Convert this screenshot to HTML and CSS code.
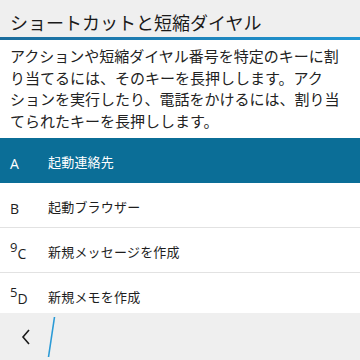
FILE: index.html
```html
<!DOCTYPE html>
<html lang="ja">
<head>
<meta charset="utf-8">
<link rel="stylesheet" href="styles.css">
</head>
<body>
<div class="screen">
  <header class="titlebar">
    <h1 class="title">ショートカットと短縮ダイヤル</h1>
  </header>
  <div class="accent"></div>
  <p class="intro">アクションや短縮ダイヤル番号を特定のキーに割<br>り当てるには、そのキーを長押しします。アク<br>ションを実行したり、電話をかけるには、割り当<br>てられたキーを長押しします。</p>
  <ul class="list">
    <li class="row selected"><span class="key"><span class="letter">A</span></span><span class="label">起動連絡先</span></li>
    <li class="row"><span class="key"><span class="letter">B</span></span><span class="label">起動ブラウザー</span></li>
    <li class="row"><span class="key"><sup class="num">9</sup><span class="letter">C</span></span><span class="label">新規メッセージを作成</span></li>
    <li class="row"><span class="key"><sup class="num">5</sup><span class="letter">D</span></span><span class="label">新規メモを作成</span></li>
  </ul>
  <footer class="actionbar">
    <button class="back" aria-label="戻る">
      <svg width="12" height="18" viewBox="0 0 12 18"><path d="M9 2 L3 9 L9 16" fill="none" stroke="#1a1a1a" stroke-width="1.6"/></svg>
    </button>
    <svg class="divider" width="10" height="44" viewBox="0 0 10 44"><line x1="7.5" y1="2" x2="1.5" y2="42" stroke="#2a9ad6" stroke-width="1.6"/></svg>
  </footer>
</div>
</body>
</html>
```

FILE: styles.css
```css
* { box-sizing: border-box; }
html, body { margin: 0; padding: 0; }
body {
  width: 360px;
  height: 360px;
  overflow: hidden;
  background: #fff;
  font-family: "Noto Sans CJK JP", "Noto Sans", sans-serif;
  color: #1e1e1e;
}
.screen {
  position: relative;
  width: 360px;
  height: 360px;
  overflow: hidden;
}
.titlebar {
  height: 37px;
  background: #efefef;
  display: flex;
  align-items: center;
  padding: 0 10px;
}
.title {
  margin: 0;
  font-size: 18px;
  font-weight: 400;
  line-height: 1;
  color: #1a1a1a;
  padding-top: 7px;
}
.accent {
  height: 3px;
  background: linear-gradient(to right, #1b6c9c, #2197d4);
}
.intro {
  margin: 0;
  padding: 5px 10px 0 10px;
  font-size: 15px;
  line-height: 21.7px;
  color: #222;
  height: 98px;
  white-space: nowrap;
}
.list {
  list-style: none;
  margin: 0;
  padding: 0;
}
.row {
  height: 45px;
  display: flex;
  align-items: center;
  border-bottom: 1px solid #e2e2e2;
  font-size: 13px;
}
.row.selected {
  background: #0b6e97;
  color: #fff;
  border-bottom-color: #0b6e97;
}
.key {
  width: 48px;
  padding-left: 10px;
  font-family: "Open Sans", "Noto Sans", sans-serif;
  font-size: 14px;
  display: flex;
  align-items: flex-end;
  padding-top: 7px;
}
.num {
  font-size: 13px;
  line-height: 1;
  position: relative;
  top: -7px;
  vertical-align: baseline;
}
.letter { line-height: 1; }
.label {
  padding-top: 3px;
  letter-spacing: 0.2px;
}
.actionbar {
  position: absolute;
  left: 0;
  right: 0;
  bottom: 0;
  height: 47px;
  background: #efefef;
  display: flex;
  align-items: center;
  padding-left: 16px;
}
.back {
  border: 0;
  background: transparent;
  padding: 0;
  width: 20px;
  height: 20px;
  display: flex;
  align-items: center;
  justify-content: center;
}
.divider {
  margin-left: 11px;
}
```
